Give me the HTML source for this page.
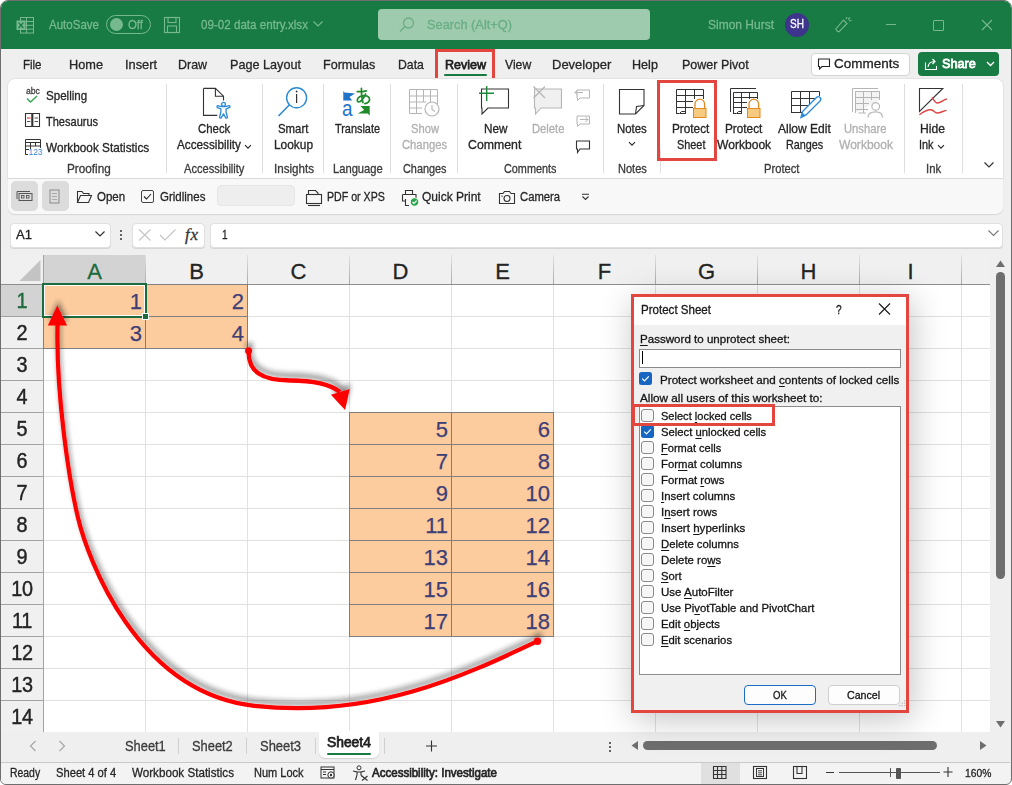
<!DOCTYPE html>
<html><head><meta charset="utf-8">
<style>
*{margin:0;padding:0;box-sizing:border-box}
html,body{width:1012px;height:785px;overflow:hidden;background:#fff}
body{font-family:"Liberation Sans",sans-serif;position:relative;color:#242424}
.a{position:absolute}
.t{position:absolute;white-space:nowrap;line-height:1;-webkit-text-stroke-width:0.3px}
u{text-decoration:underline;text-underline-offset:1.5px;text-decoration-thickness:1px}
</style></head><body>

<div class="a" style="left:0px;top:0px;width:1012px;height:785px;background:#efefef;border:1px solid #6e6e6e;border-radius:8px 8px 6px 6px;"></div>
<div class="a" style="left:1px;top:1px;width:1010px;height:48px;background:#187b43;border-radius:7px 7px 0 0;"></div>
<svg class="a" style="left:16px;top:17px;" width="18" height="17" viewBox="0 0 18 17" fill="none"><rect x="4.5" y="0.5" width="13" height="15.5" stroke="#77b98f" stroke-width="1"/>
<line x1="4.5" y1="4.5" x2="17.5" y2="4.5" stroke="#77b98f"/><line x1="4.5" y1="8.3" x2="17.5" y2="8.3" stroke="#77b98f"/><line x1="4.5" y1="12.2" x2="17.5" y2="12.2" stroke="#77b98f"/>
<line x1="10.5" y1="0.5" x2="10.5" y2="16" stroke="#77b98f"/>
<rect x="0.5" y="3.5" width="9" height="9.5" fill="#77b98f"/>
<path d="M2.6 5.6 L7.4 11 M7.4 5.6 L2.6 11" stroke="#187b43" stroke-width="1.3"/></svg>
<div class="t" style="left:49.00px;top:18.11px;font-size:13.52px;color:#77b98f;transform:scaleX(0.8533);transform-origin:0 0;">AutoSave</div>
<div class="a" style="left:106px;top:15px;width:45px;height:19px;border:1.3px solid #77b98f;border-radius:10px;"></div>
<div class="a" style="left:110px;top:18px;width:13px;height:13px;background:#77b98f;border-radius:50%;"></div>
<div class="t" style="left:128.00px;top:18.18px;font-size:13.08px;color:#77b98f;transform:scaleX(0.8687);transform-origin:0 0;">Off</div>
<svg class="a" style="left:163px;top:16px;" width="18" height="18" viewBox="0 0 18 18" fill="none"><rect x="1.5" y="1.5" width="15" height="15" stroke="#77b98f" stroke-width="1.1"/>
<rect x="5" y="1.5" width="8" height="5" stroke="#77b98f" stroke-width="1.1"/><rect x="4.5" y="10" width="9" height="6.5" stroke="#77b98f" stroke-width="1.1"/></svg>
<div class="t" style="left:201.00px;top:18.11px;font-size:13.52px;color:#77b98f;transform:scaleX(0.8595);transform-origin:0 0;">09-02 data entry.xlsx</div>
<svg class="a" style="left:312px;top:20px;" width="12" height="8" viewBox="0 0 12 8" fill="none"><path d="M1.5 1.5 L6 6 L10.5 1.5" stroke="#77b98f" stroke-width="1.2"/></svg>
<div class="a" style="left:378px;top:9px;width:272px;height:31px;background:#9ecaae;border-radius:4px;"></div>
<svg class="a" style="left:398px;top:16px;" width="18" height="18" viewBox="0 0 18 18" fill="none"><circle cx="10.5" cy="7" r="5" stroke="#69ae83" stroke-width="1.3"/><line x1="7" y1="10.5" x2="2" y2="15.5" stroke="#69ae83" stroke-width="1.5"/></svg>
<div class="t" style="left:427.00px;top:18.11px;font-size:13.52px;color:#69ae83;transform:scaleX(0.9470);transform-origin:0 0;">Search (Alt+Q)</div>
<div class="t" style="left:708.00px;top:18.11px;font-size:13.52px;color:#77b98f;transform:scaleX(0.8877);transform-origin:0 0;">Simon Hurst</div>
<div class="a" style="left:785px;top:13px;width:24px;height:24px;background:#3d348b;border-radius:50%;"></div>
<div class="t" style="left:790.00px;top:18.33px;font-size:12.79px;color:#ffffff;transform:scaleX(0.7874);transform-origin:0 0;">SH</div>
<svg class="a" style="left:834px;top:16px;" width="20" height="18" viewBox="0 0 20 18" fill="none"><path d="M3 15 L1.8 13 L9.5 4 L13 7.5 L5 15.8 Z" stroke="#77b98f" stroke-width="1.1"/><path d="M12 3 L13 1 M15 5 L17.5 4.5 M14 3.5 L16 1.5" stroke="#77b98f" stroke-width="1.1"/></svg>
<div class="a" style="left:886px;top:24px;width:10px;height:1.2px;background:#77b98f;"></div>
<div class="a" style="left:933px;top:19.5px;width:11px;height:11px;border:1.1px solid #77b98f;border-radius:1px;"></div>
<svg class="a" style="left:981px;top:19px;" width="12" height="12" viewBox="0 0 12 12" fill="none"><path d="M1 1 L11 11 M11 1 L1 11" stroke="#77b98f" stroke-width="1.1"/></svg>
<div class="t" style="left:23.00px;top:57.63px;font-size:13.37px;color:#262626;transform:scaleX(0.8593);transform-origin:0 0;">File</div>
<div class="t" style="left:69.20px;top:57.63px;font-size:13.37px;color:#262626;transform:scaleX(0.9551);transform-origin:0 0;">Home</div>
<div class="t" style="left:124.80px;top:57.63px;font-size:13.37px;color:#262626;transform:scaleX(0.9602);transform-origin:0 0;">Insert</div>
<div class="t" style="left:178.40px;top:57.63px;font-size:13.37px;color:#262626;transform:scaleX(0.9320);transform-origin:0 0;">Draw</div>
<div class="t" style="left:230.00px;top:57.63px;font-size:13.37px;color:#262626;transform:scaleX(0.9456);transform-origin:0 0;">Page Layout</div>
<div class="t" style="left:323.00px;top:57.63px;font-size:13.37px;color:#262626;transform:scaleX(0.9397);transform-origin:0 0;">Formulas</div>
<div class="t" style="left:397.50px;top:57.63px;font-size:13.37px;color:#262626;transform:scaleX(0.9193);transform-origin:0 0;">Data</div>
<div class="t" style="left:505.40px;top:57.63px;font-size:13.37px;color:#262626;transform:scaleX(0.9113);transform-origin:0 0;">View</div>
<div class="t" style="left:552.40px;top:57.63px;font-size:13.37px;color:#262626;transform:scaleX(0.9725);transform-origin:0 0;">Developer</div>
<div class="t" style="left:632.20px;top:57.63px;font-size:13.37px;color:#262626;transform:scaleX(0.9425);transform-origin:0 0;">Help</div>
<div class="t" style="left:681.60px;top:57.63px;font-size:13.37px;color:#262626;transform:scaleX(0.9350);transform-origin:0 0;">Power Pivot</div>
<div class="t" style="left:444.50px;top:57.63px;font-size:13.37px;color:#1f1f1f;transform:scaleX(0.9393);transform-origin:0 0;-webkit-text-stroke-width:0.75px;">Review</div>
<div class="a" style="left:444px;top:74px;width:43px;height:2px;background:#187b43;border-radius:1px;"></div>
<div class="a" style="left:435px;top:49px;width:60px;height:32.5px;border:3px solid #e2463e;"></div>
<div class="a" style="left:810.5px;top:52.5px;width:99px;height:23px;background:#fff;border:1px solid #d4d4d4;border-radius:4px;"></div>
<svg class="a" style="left:817px;top:58px;" width="14" height="12" viewBox="0 0 14 12" fill="none"><path d="M1.5 1 H12.5 V8.5 H5 L2.5 11 V8.5 H1.5 Z" stroke="#242424" stroke-width="1.1"/></svg>
<div class="t" style="left:834.40px;top:57.70px;font-size:12.94px;color:#1f1f1f;transform:scaleX(1.0424);transform-origin:0 0;">Comments</div>
<div class="a" style="left:918px;top:52px;width:81px;height:24px;background:#187b43;border-radius:4px;"></div>
<svg class="a" style="left:924px;top:57px;" width="16" height="14" viewBox="0 0 16 14" fill="none"><path d="M1.5 5.5 V12.5 H12.5 V9" stroke="#fff" stroke-width="1.1"/><path d="M4 10 C4.5 6 7 4.5 10.5 4.5 M8.5 2 L11 4.5 L8.5 7" stroke="#fff" stroke-width="1.2"/></svg>
<div class="t" style="left:941.90px;top:57.70px;font-size:12.94px;color:#ffffff;transform:scaleX(0.9815);transform-origin:0 0;-webkit-text-stroke-width:0.8px;">Share</div>
<svg class="a" style="left:986px;top:61px;" width="9" height="6" viewBox="0 0 9 6" fill="none"><path d="M1 1 L4.5 4.5 L8 1" stroke="#fff" stroke-width="1.4"/></svg>
<div class="a" style="left:8px;top:79px;width:995px;height:100px;background:#ffffff;border-radius:7px 7px 0 0;box-shadow:0 0 0 1px #e3e3e3;"></div>
<div class="a" style="left:8px;top:178px;width:995px;height:1px;background:#d9d9d9;"></div>
<div class="a" style="left:8px;top:179px;width:995px;height:35px;background:#f8f8f8;border-radius:0 0 7px 7px;box-shadow:0 1px 1px #d6d6d6;"></div>
<div class="a" style="left:166px;top:84px;width:1px;height:89px;background:#dedede;"></div>
<div class="a" style="left:262px;top:84px;width:1px;height:89px;background:#dedede;"></div>
<div class="a" style="left:323px;top:84px;width:1px;height:89px;background:#dedede;"></div>
<div class="a" style="left:390px;top:84px;width:1px;height:89px;background:#dedede;"></div>
<div class="a" style="left:457px;top:84px;width:1px;height:89px;background:#dedede;"></div>
<div class="a" style="left:603px;top:84px;width:1px;height:89px;background:#dedede;"></div>
<div class="a" style="left:904px;top:84px;width:1px;height:89px;background:#dedede;"></div>
<div class="a" style="left:962px;top:84px;width:1px;height:89px;background:#dedede;"></div>
<div class="a" style="left:660px;top:150px;width:1px;height:23px;background:#dedede;"></div>
<div class="t" style="left:67.40px;top:162.95px;font-size:12.06px;color:#3b3b3b;transform:scaleX(0.9747);transform-origin:0 0;">Proofing</div>
<div class="t" style="left:184.20px;top:162.95px;font-size:12.06px;color:#3b3b3b;transform:scaleX(0.9210);transform-origin:0 0;">Accessibility</div>
<div class="t" style="left:273.50px;top:162.95px;font-size:12.06px;color:#3b3b3b;transform:scaleX(0.9625);transform-origin:0 0;">Insights</div>
<div class="t" style="left:332.50px;top:162.95px;font-size:12.06px;color:#3b3b3b;transform:scaleX(0.9276);transform-origin:0 0;">Language</div>
<div class="t" style="left:402.70px;top:162.95px;font-size:12.06px;color:#3b3b3b;transform:scaleX(0.9024);transform-origin:0 0;">Changes</div>
<div class="t" style="left:503.90px;top:162.95px;font-size:12.06px;color:#3b3b3b;transform:scaleX(0.9001);transform-origin:0 0;">Comments</div>
<div class="t" style="left:617.80px;top:162.95px;font-size:12.06px;color:#3b3b3b;transform:scaleX(0.9147);transform-origin:0 0;">Notes</div>
<div class="t" style="left:764.20px;top:162.95px;font-size:12.06px;color:#3b3b3b;transform:scaleX(0.9283);transform-origin:0 0;">Protect</div>
<div class="t" style="left:925.60px;top:162.95px;font-size:12.06px;color:#3b3b3b;transform:scaleX(0.9403);transform-origin:0 0;">Ink</div>
<div class="t" style="left:45.50px;top:89.95px;font-size:12.06px;color:#262626;transform:scaleX(0.9593);transform-origin:0 0;">Spelling</div>
<div class="t" style="left:45.50px;top:116.05px;font-size:12.06px;color:#262626;transform:scaleX(0.9158);transform-origin:0 0;">Thesaurus</div>
<div class="t" style="left:45.50px;top:142.25px;font-size:12.06px;color:#262626;transform:scaleX(0.9775);transform-origin:0 0;">Workbook Statistics</div>
<div class="t" style="left:25.80px;top:86.85px;font-size:9.00px;color:#444;transform:scaleX(0.9593);transform-origin:0 0;">abc</div>
<svg class="a" style="left:25px;top:95px;" width="16" height="9" viewBox="0 0 16 9" fill="none"><path d="M2 3.5 L5.5 7 L12 1" stroke="#3aa757" stroke-width="1.5"/></svg>
<svg class="a" style="left:24px;top:112px;" width="17" height="16" viewBox="0 0 17 16" fill="none"><path d="M1.5 1.5 H7.8 V14.5 H1.5 Z M8.8 1.5 H15.5 V14.5 H8.8 Z" stroke="#333" stroke-width="1.1"/><path d="M3 6 H6.5" stroke="#d22" stroke-width="1"/><path d="M3 9.5 H6.5 M10.5 6 H14 M10.5 9.5 H14" stroke="#555" stroke-width="1"/></svg>
<svg class="a" style="left:24px;top:138px;" width="19" height="18" viewBox="0 0 19 18" fill="none"><path d="M1.5 16.5 V1.5 H16.5 V10 M1.5 4.5 H16.5 M1.5 8 H16.5 M1.5 11.5 H5 M6.5 4.5 V11 M11.5 4.5 V8 M1.5 16.5 H4" stroke="#333" stroke-width="1"/><text x="4.6" y="17.2" font-size="8.2" font-family="Liberation Sans" fill="#2b8ad6">123</text></svg>
<svg class="a" style="left:198px;top:84px;" width="36" height="36" viewBox="0 0 36 36" fill="none"><path d="M5.5 4.4 H17.4 L25.5 12.2 V16.5 M19.3 31.4 H5.5 V4.4" stroke="#333" stroke-width="1.1"/><path d="M17.4 4.4 V12.2 H25.5" stroke="#333" stroke-width="1.1"/><g transform="translate(216.5 102.3) translate(-198 -84)"><path d="M5.2 4.3 L1.2 3.3 Q0.2 3.6 0.6 5 L4.4 6.6 V10 L3 15 Q3.3 16 4.6 15.8 L7 11.6 L9.4 15.8 Q10.7 16 11 15 L9.6 10 V6.6 L13.4 5 Q13.8 3.6 12.8 3.3 L8.8 4.3 Z" fill="#fff" stroke="#2b8ad6" stroke-width="1.3" stroke-linejoin="round"/><circle cx="7" cy="2" r="1.9" fill="#fff" stroke="#2b8ad6" stroke-width="1.3"/></g></svg>
<div class="t" style="left:198.40px;top:123.15px;font-size:12.06px;color:#262626;transform:scaleX(0.9457);transform-origin:0 0;">Check</div>
<div class="t" style="left:176.60px;top:139.15px;font-size:12.06px;color:#262626;transform:scaleX(0.9743);transform-origin:0 0;">Accessibility</div>
<svg class="a" style="left:244px;top:144px;" width="8" height="6" viewBox="0 0 8 6" fill="none"><path d="M1 1.2 L4 4.2 L7 1.2" stroke="#262626" stroke-width="1.1"/></svg>
<svg class="a" style="left:276px;top:85px;" width="34" height="34" viewBox="0 0 34 34" fill="none"><circle cx="20.6" cy="12.8" r="10" stroke="#2b8ad6" stroke-width="1.4"/><path d="M13.5 19.8 L2.5 31" stroke="#2b8ad6" stroke-width="1.6"/><path d="M20.6 9 V18" stroke="#333" stroke-width="1.2"/><circle cx="20.6" cy="6.5" r="0.9" fill="#333"/></svg>
<div class="t" style="left:278.30px;top:123.15px;font-size:12.06px;color:#262626;transform:scaleX(0.9456);transform-origin:0 0;">Smart</div>
<div class="t" style="left:273.50px;top:139.15px;font-size:12.06px;color:#262626;transform:scaleX(0.9881);transform-origin:0 0;">Lookup</div>
<svg class="a" style="left:338px;top:84px;" width="36" height="36" viewBox="0 0 36 36" fill="none"><path d="M5.3 6.9 L6.4 8.5 L17 9.4 L11.5 13.1 L14.2 16.5 H5.3 Z" fill="#1f73c9"/><path d="M22.5 22 H31.7 V31.7 L29.8 29.4 H19.7 L26.1 26.1 Z" fill="#1e8a2a"/><text x="0" y="0" font-size="22" font-family="Liberation Sans" fill="#1f73c9" transform="translate(4.0 31.7) scale(0.86 1)">a</text><path d="M19.3 7.6 C22 7.9 25 7.6 28.3 6.8 M23.4 4.4 C23.3 9 23.6 14 24.9 18.6 M27.6 10 C25.6 14.5 22.4 18.2 20.4 17.9 C18.6 17.6 18.9 14.4 21.7 12.8 C24.7 11 29.6 11.2 31.2 13.8 C32.6 16.6 30.2 19.2 26.8 19.7" stroke="#1e8a2a" stroke-width="1.7" stroke-linecap="round" fill="none"/></svg>
<div class="t" style="left:335.00px;top:123.15px;font-size:12.06px;color:#262626;transform:scaleX(0.9032);transform-origin:0 0;">Translate</div>
<svg class="a" style="left:408px;top:88px;" width="32" height="30" viewBox="0 0 32 30" fill="none"><g stroke="#b5b5b5" stroke-width="1"><path d="M1.5 1.5 H29.5 V16 M1.5 1.5 V25.5 H14 M1.5 8 H29.5 M1.5 14 H18 M1.5 20 H14 M8.5 1.5 V25.5 M15.5 1.5 V14 M22.5 1.5 V14"/></g><circle cx="24" cy="21" r="7" stroke="#b5b5b5" stroke-width="1.2" fill="#fff"/><path d="M24 17 V21.5 L27 23.5" stroke="#b5b5b5" stroke-width="1.1"/></svg>
<div class="t" style="left:410.70px;top:123.15px;font-size:12.06px;color:#b0b0b0;transform:scaleX(0.9298);transform-origin:0 0;">Show</div>
<div class="t" style="left:401.50px;top:139.15px;font-size:12.06px;color:#b0b0b0;transform:scaleX(0.9334);transform-origin:0 0;">Changes</div>
<svg class="a" style="left:478px;top:85px;" width="34" height="30" viewBox="0 0 34 30" fill="none"><path d="M3.5 4 H30.5 V23 H10 L4 29 V23 H3.5 Z" stroke="#333" stroke-width="1.1" fill="#fff"/><path d="M1 8.3 H16 M8.7 1 V16" stroke="#1e8a3c" stroke-width="1.4"/></svg>
<div class="t" style="left:483.50px;top:123.15px;font-size:12.06px;color:#262626;transform:scaleX(0.9715);transform-origin:0 0;">New</div>
<div class="t" style="left:468.30px;top:139.15px;font-size:12.06px;color:#262626;transform:scaleX(1.0211);transform-origin:0 0;">Comment</div>
<svg class="a" style="left:532px;top:85px;" width="32" height="30" viewBox="0 0 32 30" fill="none"><path d="M2.5 4 H29.5 V23 H9 L3.5 29 V23 H2.5 Z" stroke="#b5b5b5" stroke-width="1.1" fill="#f0f0f0"/><path d="M1.5 1.5 L13 13 M13 1.5 L1.5 13" stroke="#b5b5b5" stroke-width="1.2"/></svg>
<div class="t" style="left:531.50px;top:123.15px;font-size:12.06px;color:#b0b0b0;transform:scaleX(0.9293);transform-origin:0 0;">Delete</div>
<svg class="a" style="left:574px;top:87px;" width="17" height="15" viewBox="0 0 17 15" fill="none"><path d="M3 3 H15.5 V11 H6 L3.5 13.5 V11 H3 Z" stroke="#b5b5b5" stroke-width="1"/><path d="M1 5.5 H9 M1 5.5 L3.5 3 M1 5.5 L3.5 8" stroke="#b5b5b5" stroke-width="1"/></svg>
<svg class="a" style="left:574px;top:113px;" width="17" height="15" viewBox="0 0 17 15" fill="none"><path d="M3 3 H15.5 V11 H6 L3.5 13.5 V11 H3 Z" stroke="#b5b5b5" stroke-width="1"/><path d="M6 6.5 H14 M14 6.5 L11.5 4 M14 6.5 L11.5 9" stroke="#b5b5b5" stroke-width="1"/></svg>
<svg class="a" style="left:574px;top:139px;" width="17" height="15" viewBox="0 0 17 15" fill="none"><path d="M2.5 2 H15.5 V10 H6 L3.5 13.5 V10 H2.5 Z" stroke="#333" stroke-width="1.1"/></svg>
<svg class="a" style="left:618px;top:88px;" width="28" height="28" viewBox="0 0 28 28" fill="none"><path d="M1.5 1.5 H26 V17.5 L17.5 26 H1.5 Z" stroke="#333" stroke-width="1.1" fill="#fff"/><path d="M26 17.5 L18.5 18.5 L17.5 26" stroke="#333" stroke-width="1.1"/></svg>
<div class="t" style="left:616.90px;top:123.15px;font-size:12.06px;color:#262626;transform:scaleX(0.9432);transform-origin:0 0;">Notes</div>
<svg class="a" style="left:628px;top:141px;" width="8" height="6" viewBox="0 0 8 6" fill="none"><path d="M1 1.2 L4 4.2 L7 1.2" stroke="#262626" stroke-width="1.1"/></svg>
<svg class="a" style="left:672px;top:86px;" width="38" height="34" viewBox="0 0 38 34" fill="none"><path d="M4.5 28 V3.5 H31.5 V13 M13.5 3.5 V28 M22.5 3.5 V13 M4.5 9.5 H31.5 M4.5 15.5 H21 M4.5 21.5 H21 M8 27.5 H13.5" stroke="#333" stroke-width="1"/><path d="M4.5 27.5 H7.5 L9.5 25.5 H13.5" stroke="#333" stroke-width="1"/><path d="M23 22.5 V18 A4.8 4.8 0 0 1 32.6 18 V22.5" stroke="#e3891f" stroke-width="1.3"/><rect x="21.5" y="22.5" width="12.5" height="9" fill="#f6cb80" stroke="#e3891f" stroke-width="1"/></svg>
<div class="t" style="left:671.50px;top:123.15px;font-size:12.06px;color:#262626;transform:scaleX(0.9780);transform-origin:0 0;">Protect</div>
<div class="t" style="left:676.50px;top:139.15px;font-size:12.06px;color:#262626;transform:scaleX(0.9034);transform-origin:0 0;">Sheet</div>
<div class="a" style="left:657px;top:80px;width:60px;height:80.5px;border:3px solid #e2463e;"></div>
<svg class="a" style="left:726px;top:86px;" width="38" height="34" viewBox="0 0 38 34" fill="none"><path d="M4.5 26 V2.5 H30" stroke="#333" stroke-width="1"/><path d="M7.5 28 V6.5 H31.5 V13 M15.5 6.5 V28 M23.5 6.5 V13 M7.5 11.5 H31.5 M7.5 16.5 H21 M7.5 21.5 H21 M11 27.5 H15.5" stroke="#333" stroke-width="1"/><path d="M7.5 27.5 H10.5 L12.5 25.5 H15.5" stroke="#333" stroke-width="1"/><path d="M23 22.5 V18 A4.8 4.8 0 0 1 32.6 18 V22.5" stroke="#e3891f" stroke-width="1.3"/><rect x="21.5" y="22.5" width="12.5" height="9" fill="#f6cb80" stroke="#e3891f" stroke-width="1"/></svg>
<div class="t" style="left:725.40px;top:123.15px;font-size:12.06px;color:#262626;transform:scaleX(0.9780);transform-origin:0 0;">Protect</div>
<div class="t" style="left:716.50px;top:139.15px;font-size:12.06px;color:#262626;transform:scaleX(1.0025);transform-origin:0 0;">Workbook</div>
<svg class="a" style="left:789px;top:88px;" width="34" height="32" viewBox="0 0 34 32" fill="none"><path d="M2.5 25 V3.5 H30.5 V8 M11.5 3.5 V25 M20.5 3.5 V17 M2.5 10.5 H30.5 M2.5 17.5 H22 M2.5 24.5 H15" stroke="#333" stroke-width="1"/><path d="M12 29.5 L13.5 23.5 L27.5 9.5 A2.4 2.4 0 0 1 31 13 L17 27 Z" stroke="#2b8ad6" stroke-width="1.4" fill="#fff"/><path d="M12 29.5 L13.3 24.5 L16.8 27.8 Z" fill="#2b8ad6"/></svg>
<div class="t" style="left:778.00px;top:123.15px;font-size:12.06px;color:#262626;transform:scaleX(0.9970);transform-origin:0 0;">Allow Edit</div>
<div class="t" style="left:786.40px;top:139.15px;font-size:12.06px;color:#262626;transform:scaleX(0.8975);transform-origin:0 0;">Ranges</div>
<svg class="a" style="left:850px;top:87px;" width="34" height="32" viewBox="0 0 34 32" fill="none"><path d="M2.5 25 V1.5 H28" stroke="#b5b5b5" stroke-width="1"/><path d="M5.5 26 V4.5 H29.5 V13 M13.5 4.5 V26 M21.5 4.5 V13 M5.5 10.5 H29.5 M5.5 16.5 H19 M5.5 22.5 H18 M8.5 26 H16" stroke="#b5b5b5" stroke-width="1" fill="#f3f3f3"/><circle cx="25.7" cy="19.4" r="3.8" fill="#fff" stroke="#b5b5b5" stroke-width="1.2"/><path d="M18 30.5 C18 26.5 21 24.8 25.7 24.8 C30.4 24.8 32.5 26.5 32.5 30.5" stroke="#b5b5b5" stroke-width="1.2" fill="#fff"/></svg>
<div class="t" style="left:844.40px;top:123.15px;font-size:12.06px;color:#b0b0b0;transform:scaleX(0.9320);transform-origin:0 0;">Unshare</div>
<div class="t" style="left:838.50px;top:139.15px;font-size:12.06px;color:#b0b0b0;transform:scaleX(1.0006);transform-origin:0 0;">Workbook</div>
<svg class="a" style="left:917px;top:86px;" width="33" height="30" viewBox="0 0 33 30" fill="none"><path d="M2.5 2.5 H25.8 L2.5 25.5 Z" stroke="#333" stroke-width="1.1" fill="#fff"/><path d="M15 11.5 C17 14 18 17 20.5 17 C23.5 17 26 14 30 12.8 M2.4 28.8 C6 26 9 23.5 14 23.7 C17 24 17.5 27 20 27 C23 27 26 25 29.5 24.4" stroke="#e04141" stroke-width="1.4"/></svg>
<div class="t" style="left:920.30px;top:123.15px;font-size:12.06px;color:#262626;transform:scaleX(1.0044);transform-origin:0 0;">Hide</div>
<div class="t" style="left:919.40px;top:139.15px;font-size:12.06px;color:#262626;transform:scaleX(0.9031);transform-origin:0 0;">Ink</div>
<svg class="a" style="left:937px;top:144px;" width="8" height="6" viewBox="0 0 8 6" fill="none"><path d="M1 1.2 L4 4.2 L7 1.2" stroke="#262626" stroke-width="1.1"/></svg>
<svg class="a" style="left:983px;top:161px;" width="12" height="8" viewBox="0 0 12 8" fill="none"><path d="M1.5 1.5 L6 6 L10.5 1.5" stroke="#333" stroke-width="1.2"/></svg>
<div class="a" style="left:11px;top:181px;width:27px;height:30px;background:#dcdcdc;border-radius:5px;"></div>
<div class="a" style="left:41.5px;top:181px;width:27px;height:30px;background:#dcdcdc;border-radius:5px;"></div>
<svg class="a" style="left:16px;top:190px;" width="18" height="12" viewBox="0 0 18 12" fill="none"><path d="M1 1.5 H14 M1 1.5 V9" stroke="#555" stroke-width="1"/><rect x="3" y="3.5" width="13" height="7" stroke="#555" stroke-width="1"/><rect x="5.5" y="5.5" width="2.5" height="2.5" stroke="#555" stroke-width=".9"/><rect x="10.5" y="5.5" width="2.5" height="2.5" stroke="#555" stroke-width=".9"/></svg>
<svg class="a" style="left:49px;top:189px;" width="12" height="16" viewBox="0 0 12 16" fill="none"><rect x="1" y="1" width="9" height="13" stroke="#8a8a8a" stroke-width="1"/><path d="M3 4.5 H8 M3 7.5 H8 M3 10.5 H8" stroke="#aaa" stroke-width="1"/></svg>
<svg class="a" style="left:76px;top:190px;" width="17" height="14" viewBox="0 0 17 14" fill="none"><path d="M1.5 12.5 V1.5 H6 L7.5 3.5 H13 V5.5 M1.5 12.5 H12.5 L15.5 5.5 H4.5 Z" stroke="#333" stroke-width="1.1"/></svg>
<div class="t" style="left:97.40px;top:191.05px;font-size:12.65px;color:#262626;transform:scaleX(0.9089);transform-origin:0 0;">Open</div>
<div class="a" style="left:141px;top:189.5px;width:13px;height:13px;border:1px solid #444;border-radius:2px;"></div>
<svg class="a" style="left:141px;top:189.5px;" width="13" height="13" viewBox="0 0 13 13" fill="none"><path d="M3 6.5 L5.5 9 L10 4" stroke="#222" stroke-width="1.1"/></svg>
<div class="t" style="left:159.60px;top:191.05px;font-size:12.65px;color:#262626;transform:scaleX(0.9101);transform-origin:0 0;">Gridlines</div>
<div class="a" style="left:217px;top:185px;width:78px;height:21px;background:#eeeeee;border:1px solid #e6e6e6;border-radius:4px;"></div>
<svg class="a" style="left:305px;top:189px;" width="18" height="18" viewBox="0 0 18 18" fill="none"><path d="M3.5 5 V1.5 H10.5 L13 4 V5" stroke="#333" stroke-width="1.1"/><rect x="1.5" y="5.5" width="15" height="9" stroke="#333" stroke-width="1.1"/><path d="M3 16.5 H15" stroke="#333" stroke-width="1.1"/></svg>
<div class="t" style="left:326.50px;top:190.75px;font-size:12.65px;color:#262626;transform:scaleX(0.8395);transform-origin:0 0;">PDF or XPS</div>
<svg class="a" style="left:401px;top:189px;" width="19" height="18" viewBox="0 0 19 18" fill="none"><path d="M4.5 5 V1.5 H11.5 V5 M1.5 5.5 H15 V9 M1.5 5.5 V12 H4.5 M4.5 10 V16.5 H8" stroke="#333" stroke-width="1.1"/><circle cx="13.5" cy="13" r="4.2" fill="#2ea44f" stroke="#fff" stroke-width=".8"/><path d="M11.5 13 L13 14.5 L15.7 11.7" stroke="#fff" stroke-width="1.1"/></svg>
<div class="t" style="left:422.20px;top:190.75px;font-size:12.65px;color:#262626;transform:scaleX(0.9493);transform-origin:0 0;">Quick Print</div>
<svg class="a" style="left:498px;top:190px;" width="18" height="15" viewBox="0 0 18 15" fill="none"><path d="M1.5 3.5 H5 L6.5 1.5 H11.5 L13 3.5 H16.5 V13.5 H1.5 Z" stroke="#333" stroke-width="1.1"/><circle cx="9" cy="8.5" r="3" stroke="#333" stroke-width="1.1"/><rect x="3.5" y="5.5" width="1.2" height="1.2" fill="#333"/></svg>
<div class="t" style="left:519.60px;top:190.75px;font-size:12.65px;color:#262626;transform:scaleX(0.8930);transform-origin:0 0;">Camera</div>
<svg class="a" style="left:581px;top:193px;" width="9" height="8" viewBox="0 0 9 8" fill="none"><path d="M1 1.2 H8 M1.5 3.5 L4.5 6.5 L7.5 3.5" stroke="#333" stroke-width="1.1"/></svg>
<div class="a" style="left:9.5px;top:222.5px;width:101px;height:25px;background:#fff;border:1px solid #e0e0e0;border-radius:4px;box-shadow:0 1px 0 #d6d6d6;"></div>
<div class="t" style="left:16.00px;top:229.25px;font-size:12.65px;color:#242424;transform:scaleX(1.0329);transform-origin:0 0;">A1</div>
<svg class="a" style="left:94px;top:230px;" width="12" height="8" viewBox="0 0 12 8" fill="none"><path d="M1.5 1.5 L6 6 L10.5 1.5" stroke="#333" stroke-width="1.2"/></svg>
<div class="a" style="left:120px;top:230px;width:2px;height:2px;background:#333;border-radius:1px;"></div>
<div class="a" style="left:120px;top:234px;width:2px;height:2px;background:#333;border-radius:1px;"></div>
<div class="a" style="left:120px;top:238px;width:2px;height:2px;background:#333;border-radius:1px;"></div>
<div class="a" style="left:131.5px;top:222.5px;width:73px;height:25px;background:#fff;border:1px solid #e0e0e0;border-radius:4px;box-shadow:0 1px 0 #d6d6d6;"></div>
<svg class="a" style="left:137px;top:228px;" width="16" height="14" viewBox="0 0 16 14" fill="none"><path d="M2 1.5 L13.5 12.5 M13.5 1.5 L2 12.5" stroke="#c4c4c4" stroke-width="1.1"/></svg>
<svg class="a" style="left:158px;top:228px;" width="20" height="14" viewBox="0 0 20 14" fill="none"><path d="M2 7 L7 12 L17.5 1.5" stroke="#c4c4c4" stroke-width="1.1"/></svg>
<div class="t" style="left:185px;top:225.5px;font-family:'Liberation Serif',serif;font-style:italic;font-size:17px;color:#333;letter-spacing:0.8px">fx</div>
<div class="a" style="left:209.5px;top:222.5px;width:793px;height:25px;background:#fff;border:1px solid #e0e0e0;border-radius:4px;box-shadow:0 1px 0 #d6d6d6;"></div>
<div class="t" style="left:221.70px;top:228.75px;font-size:12.65px;color:#242424;transform:scaleX(0.7979);transform-origin:0 0;">1</div>
<svg class="a" style="left:987px;top:229px;" width="13" height="8" viewBox="0 0 13 8" fill="none"><path d="M1.5 1.5 L6.5 6.5 L11.5 1.5" stroke="#777" stroke-width="1.1"/></svg>
<div class="a" style="left:43px;top:284px;width:947px;height:448px;background:#fff;"></div>
<div class="a" style="left:1px;top:255px;width:989px;height:29px;background:#f0f0f0;"></div>
<div class="a" style="left:1px;top:284px;width:42px;height:448px;background:#f0f0f0;"></div>
<div class="a" style="left:43px;top:255px;width:102px;height:29px;background:#d3d3d3;"></div>
<div class="a" style="left:1px;top:284px;width:43px;height:32px;background:#d3d3d3;"></div>
<svg class="a" style="left:18px;top:259px;" width="24" height="23" viewBox="0 0 24 23" fill="none"><path d="M22.5 1 V22 H1.5 Z" fill="#c3c3c3"/></svg>
<div class="a" style="left:145px;top:284px;width:1px;height:448px;background:#e1e1e1;"></div>
<div class="a" style="left:145px;top:255px;width:1px;height:29px;background:linear-gradient(#e2e2e2,#a8a8a8)"></div>
<div class="a" style="left:247px;top:284px;width:1px;height:448px;background:#e1e1e1;"></div>
<div class="a" style="left:247px;top:255px;width:1px;height:29px;background:linear-gradient(#e2e2e2,#a8a8a8)"></div>
<div class="a" style="left:349px;top:284px;width:1px;height:448px;background:#e1e1e1;"></div>
<div class="a" style="left:349px;top:255px;width:1px;height:29px;background:linear-gradient(#e2e2e2,#a8a8a8)"></div>
<div class="a" style="left:451px;top:284px;width:1px;height:448px;background:#e1e1e1;"></div>
<div class="a" style="left:451px;top:255px;width:1px;height:29px;background:linear-gradient(#e2e2e2,#a8a8a8)"></div>
<div class="a" style="left:553px;top:284px;width:1px;height:448px;background:#e1e1e1;"></div>
<div class="a" style="left:553px;top:255px;width:1px;height:29px;background:linear-gradient(#e2e2e2,#a8a8a8)"></div>
<div class="a" style="left:655px;top:284px;width:1px;height:448px;background:#e1e1e1;"></div>
<div class="a" style="left:655px;top:255px;width:1px;height:29px;background:linear-gradient(#e2e2e2,#a8a8a8)"></div>
<div class="a" style="left:757px;top:284px;width:1px;height:448px;background:#e1e1e1;"></div>
<div class="a" style="left:757px;top:255px;width:1px;height:29px;background:linear-gradient(#e2e2e2,#a8a8a8)"></div>
<div class="a" style="left:859px;top:284px;width:1px;height:448px;background:#e1e1e1;"></div>
<div class="a" style="left:859px;top:255px;width:1px;height:29px;background:linear-gradient(#e2e2e2,#a8a8a8)"></div>
<div class="a" style="left:961px;top:284px;width:1px;height:448px;background:#e1e1e1;"></div>
<div class="a" style="left:961px;top:255px;width:1px;height:29px;background:linear-gradient(#e2e2e2,#a8a8a8)"></div>
<div class="a" style="left:43px;top:316px;width:947px;height:1px;background:#e1e1e1;"></div>
<div class="a" style="left:1px;top:316px;width:43px;height:1px;background:#a2a2a2;"></div>
<div class="a" style="left:43px;top:348px;width:947px;height:1px;background:#e1e1e1;"></div>
<div class="a" style="left:1px;top:348px;width:43px;height:1px;background:#a2a2a2;"></div>
<div class="a" style="left:43px;top:380px;width:947px;height:1px;background:#e1e1e1;"></div>
<div class="a" style="left:1px;top:380px;width:43px;height:1px;background:#a2a2a2;"></div>
<div class="a" style="left:43px;top:412px;width:947px;height:1px;background:#e1e1e1;"></div>
<div class="a" style="left:1px;top:412px;width:43px;height:1px;background:#a2a2a2;"></div>
<div class="a" style="left:43px;top:444px;width:947px;height:1px;background:#e1e1e1;"></div>
<div class="a" style="left:1px;top:444px;width:43px;height:1px;background:#a2a2a2;"></div>
<div class="a" style="left:43px;top:476px;width:947px;height:1px;background:#e1e1e1;"></div>
<div class="a" style="left:1px;top:476px;width:43px;height:1px;background:#a2a2a2;"></div>
<div class="a" style="left:43px;top:508px;width:947px;height:1px;background:#e1e1e1;"></div>
<div class="a" style="left:1px;top:508px;width:43px;height:1px;background:#a2a2a2;"></div>
<div class="a" style="left:43px;top:540px;width:947px;height:1px;background:#e1e1e1;"></div>
<div class="a" style="left:1px;top:540px;width:43px;height:1px;background:#a2a2a2;"></div>
<div class="a" style="left:43px;top:572px;width:947px;height:1px;background:#e1e1e1;"></div>
<div class="a" style="left:1px;top:572px;width:43px;height:1px;background:#a2a2a2;"></div>
<div class="a" style="left:43px;top:604px;width:947px;height:1px;background:#e1e1e1;"></div>
<div class="a" style="left:1px;top:604px;width:43px;height:1px;background:#a2a2a2;"></div>
<div class="a" style="left:43px;top:636px;width:947px;height:1px;background:#e1e1e1;"></div>
<div class="a" style="left:1px;top:636px;width:43px;height:1px;background:#a2a2a2;"></div>
<div class="a" style="left:43px;top:668px;width:947px;height:1px;background:#e1e1e1;"></div>
<div class="a" style="left:1px;top:668px;width:43px;height:1px;background:#a2a2a2;"></div>
<div class="a" style="left:43px;top:700px;width:947px;height:1px;background:#e1e1e1;"></div>
<div class="a" style="left:1px;top:700px;width:43px;height:1px;background:#a2a2a2;"></div>
<div class="a" style="left:1px;top:284px;width:989px;height:1px;background:#8e8e8e;"></div>
<div class="a" style="left:43px;top:255px;width:1px;height:477px;background:#a2a2a2;"></div>
<div class="t" style="left:54.5px;width:80px;text-align:center;top:260.5px;font-size:22px;color:#1e6b3d">A</div>
<div class="t" style="left:156.5px;width:80px;text-align:center;top:260.5px;font-size:22px;color:#242424">B</div>
<div class="t" style="left:258.5px;width:80px;text-align:center;top:260.5px;font-size:22px;color:#242424">C</div>
<div class="t" style="left:360.5px;width:80px;text-align:center;top:260.5px;font-size:22px;color:#242424">D</div>
<div class="t" style="left:462.5px;width:80px;text-align:center;top:260.5px;font-size:22px;color:#242424">E</div>
<div class="t" style="left:564.5px;width:80px;text-align:center;top:260.5px;font-size:22px;color:#242424">F</div>
<div class="t" style="left:666.5px;width:80px;text-align:center;top:260.5px;font-size:22px;color:#242424">G</div>
<div class="t" style="left:768.5px;width:80px;text-align:center;top:260.5px;font-size:22px;color:#242424">H</div>
<div class="t" style="left:870.5px;width:80px;text-align:center;top:260.5px;font-size:22px;color:#242424">I</div>
<div class="t" style="left:1px;width:42px;text-align:center;top:290.1px;font-size:22.5px;color:#1e6b3d;letter-spacing:-0.3px;transform:scaleX(0.88);-webkit-text-stroke-width:0.45px">1</div>
<div class="t" style="left:1px;width:42px;text-align:center;top:322.1px;font-size:22.5px;color:#242424;letter-spacing:-0.3px;transform:scaleX(0.88);-webkit-text-stroke-width:0.45px">2</div>
<div class="t" style="left:1px;width:42px;text-align:center;top:354.1px;font-size:22.5px;color:#242424;letter-spacing:-0.3px;transform:scaleX(0.88);-webkit-text-stroke-width:0.45px">3</div>
<div class="t" style="left:1px;width:42px;text-align:center;top:386.1px;font-size:22.5px;color:#242424;letter-spacing:-0.3px;transform:scaleX(0.88);-webkit-text-stroke-width:0.45px">4</div>
<div class="t" style="left:1px;width:42px;text-align:center;top:418.1px;font-size:22.5px;color:#242424;letter-spacing:-0.3px;transform:scaleX(0.88);-webkit-text-stroke-width:0.45px">5</div>
<div class="t" style="left:1px;width:42px;text-align:center;top:450.1px;font-size:22.5px;color:#242424;letter-spacing:-0.3px;transform:scaleX(0.88);-webkit-text-stroke-width:0.45px">6</div>
<div class="t" style="left:1px;width:42px;text-align:center;top:482.1px;font-size:22.5px;color:#242424;letter-spacing:-0.3px;transform:scaleX(0.88);-webkit-text-stroke-width:0.45px">7</div>
<div class="t" style="left:1px;width:42px;text-align:center;top:514.1px;font-size:22.5px;color:#242424;letter-spacing:-0.3px;transform:scaleX(0.88);-webkit-text-stroke-width:0.45px">8</div>
<div class="t" style="left:1px;width:42px;text-align:center;top:546.1px;font-size:22.5px;color:#242424;letter-spacing:-0.3px;transform:scaleX(0.88);-webkit-text-stroke-width:0.45px">9</div>
<div class="t" style="left:1px;width:42px;text-align:center;top:578.1px;font-size:22.5px;color:#242424;letter-spacing:-0.3px;transform:scaleX(0.88);-webkit-text-stroke-width:0.45px">10</div>
<div class="t" style="left:1px;width:42px;text-align:center;top:610.1px;font-size:22.5px;color:#242424;letter-spacing:-0.3px;transform:scaleX(0.88);-webkit-text-stroke-width:0.45px">11</div>
<div class="t" style="left:1px;width:42px;text-align:center;top:642.1px;font-size:22.5px;color:#242424;letter-spacing:-0.3px;transform:scaleX(0.88);-webkit-text-stroke-width:0.45px">12</div>
<div class="t" style="left:1px;width:42px;text-align:center;top:674.1px;font-size:22.5px;color:#242424;letter-spacing:-0.3px;transform:scaleX(0.88);-webkit-text-stroke-width:0.45px">13</div>
<div class="t" style="left:1px;width:42px;text-align:center;top:706.1px;font-size:22.5px;color:#242424;letter-spacing:-0.3px;transform:scaleX(0.88);-webkit-text-stroke-width:0.45px">14</div>
<div class="a" style="left:43px;top:284px;width:205px;height:65px;background:#fccc9e;"></div>
<div class="a" style="left:43px;top:284px;width:1px;height:65px;background:#7f7f7f;"></div>
<div class="a" style="left:145px;top:284px;width:1px;height:65px;background:#7f7f7f;"></div>
<div class="a" style="left:247px;top:284px;width:1px;height:65px;background:#7f7f7f;"></div>
<div class="a" style="left:43px;top:284px;width:205px;height:1px;background:#7f7f7f;"></div>
<div class="a" style="left:43px;top:316px;width:205px;height:1px;background:#7f7f7f;"></div>
<div class="a" style="left:43px;top:348px;width:205px;height:1px;background:#7f7f7f;"></div>
<div class="t" style="left:47px;width:95px;text-align:right;top:291.3px;font-size:22px;color:#3f3f76;-webkit-text-stroke:0.25px #3f3f76">1</div>
<div class="t" style="left:149px;width:95px;text-align:right;top:291.3px;font-size:22px;color:#3f3f76;-webkit-text-stroke:0.25px #3f3f76">2</div>
<div class="t" style="left:47px;width:95px;text-align:right;top:323.3px;font-size:22px;color:#3f3f76;-webkit-text-stroke:0.25px #3f3f76">3</div>
<div class="t" style="left:149px;width:95px;text-align:right;top:323.3px;font-size:22px;color:#3f3f76;-webkit-text-stroke:0.25px #3f3f76">4</div>
<div class="a" style="left:349px;top:412px;width:205px;height:225px;background:#fccc9e;"></div>
<div class="a" style="left:349px;top:412px;width:1px;height:225px;background:#7f7f7f;"></div>
<div class="a" style="left:451px;top:412px;width:1px;height:225px;background:#7f7f7f;"></div>
<div class="a" style="left:553px;top:412px;width:1px;height:225px;background:#7f7f7f;"></div>
<div class="a" style="left:349px;top:412px;width:205px;height:1px;background:#7f7f7f;"></div>
<div class="a" style="left:349px;top:444px;width:205px;height:1px;background:#7f7f7f;"></div>
<div class="a" style="left:349px;top:476px;width:205px;height:1px;background:#7f7f7f;"></div>
<div class="a" style="left:349px;top:508px;width:205px;height:1px;background:#7f7f7f;"></div>
<div class="a" style="left:349px;top:540px;width:205px;height:1px;background:#7f7f7f;"></div>
<div class="a" style="left:349px;top:572px;width:205px;height:1px;background:#7f7f7f;"></div>
<div class="a" style="left:349px;top:604px;width:205px;height:1px;background:#7f7f7f;"></div>
<div class="a" style="left:349px;top:636px;width:205px;height:1px;background:#7f7f7f;"></div>
<div class="t" style="left:353px;width:95px;text-align:right;top:419.3px;font-size:22px;color:#3f3f76;-webkit-text-stroke:0.25px #3f3f76">5</div>
<div class="t" style="left:455px;width:95px;text-align:right;top:419.3px;font-size:22px;color:#3f3f76;-webkit-text-stroke:0.25px #3f3f76">6</div>
<div class="t" style="left:353px;width:95px;text-align:right;top:451.3px;font-size:22px;color:#3f3f76;-webkit-text-stroke:0.25px #3f3f76">7</div>
<div class="t" style="left:455px;width:95px;text-align:right;top:451.3px;font-size:22px;color:#3f3f76;-webkit-text-stroke:0.25px #3f3f76">8</div>
<div class="t" style="left:353px;width:95px;text-align:right;top:483.3px;font-size:22px;color:#3f3f76;-webkit-text-stroke:0.25px #3f3f76">9</div>
<div class="t" style="left:455px;width:95px;text-align:right;top:483.3px;font-size:22px;color:#3f3f76;-webkit-text-stroke:0.25px #3f3f76">10</div>
<div class="t" style="left:353px;width:95px;text-align:right;top:515.3px;font-size:22px;color:#3f3f76;-webkit-text-stroke:0.25px #3f3f76">11</div>
<div class="t" style="left:455px;width:95px;text-align:right;top:515.3px;font-size:22px;color:#3f3f76;-webkit-text-stroke:0.25px #3f3f76">12</div>
<div class="t" style="left:353px;width:95px;text-align:right;top:547.3px;font-size:22px;color:#3f3f76;-webkit-text-stroke:0.25px #3f3f76">13</div>
<div class="t" style="left:455px;width:95px;text-align:right;top:547.3px;font-size:22px;color:#3f3f76;-webkit-text-stroke:0.25px #3f3f76">14</div>
<div class="t" style="left:353px;width:95px;text-align:right;top:579.3px;font-size:22px;color:#3f3f76;-webkit-text-stroke:0.25px #3f3f76">15</div>
<div class="t" style="left:455px;width:95px;text-align:right;top:579.3px;font-size:22px;color:#3f3f76;-webkit-text-stroke:0.25px #3f3f76">16</div>
<div class="t" style="left:353px;width:95px;text-align:right;top:611.3px;font-size:22px;color:#3f3f76;-webkit-text-stroke:0.25px #3f3f76">17</div>
<div class="t" style="left:455px;width:95px;text-align:right;top:611.3px;font-size:22px;color:#3f3f76;-webkit-text-stroke:0.25px #3f3f76">18</div>
<div class="a" style="left:42px;top:283px;width:105px;height:35px;border:2px solid #1e6b3d;box-shadow:inset 0 0 0 1px #fff;"></div>
<div class="a" style="left:142px;top:313px;width:7px;height:7px;background:#1e6b3d;border:1px solid #fff;"></div>
<div class="a" style="left:990px;top:255px;width:20px;height:477px;background:#efefef;"></div>
<svg class="a" style="left:995px;top:259px;" width="11" height="9" viewBox="0 0 11 9" fill="none"><path d="M1 8 L5.5 1.5 L10 8 Z" fill="#6e6e6e"/></svg>
<div class="a" style="left:996px;top:272px;width:9px;height:307px;background:#6e6e6e;border-radius:4.5px;"></div>
<svg class="a" style="left:995px;top:720px;" width="11" height="9" viewBox="0 0 11 9" fill="none"><path d="M1 1 L5.5 7.5 L10 1 Z" fill="#6e6e6e"/></svg>
<div class="a" style="left:1px;top:732px;width:1009px;height:30px;background:#efefef;"></div>
<svg class="a" style="left:28px;top:740px;" width="10" height="12" viewBox="0 0 10 12" fill="none"><path d="M7.5 1 L2.5 6 L7.5 11" stroke="#a6a6a6" stroke-width="1.2"/></svg>
<svg class="a" style="left:57px;top:740px;" width="10" height="12" viewBox="0 0 10 12" fill="none"><path d="M2.5 1 L7.5 6 L2.5 11" stroke="#a6a6a6" stroke-width="1.2"/></svg>
<div class="t" style="left:124.50px;top:738.77px;font-size:14.39px;color:#3b3b3b;transform:scaleX(0.8944);transform-origin:0 0;">Sheet1</div>
<div class="a" style="left:178px;top:738px;width:1px;height:16px;background:#d0d0d0;"></div>
<div class="t" style="left:191.60px;top:738.77px;font-size:14.39px;color:#3b3b3b;transform:scaleX(0.8944);transform-origin:0 0;">Sheet2</div>
<div class="a" style="left:246px;top:738px;width:1px;height:16px;background:#d0d0d0;"></div>
<div class="t" style="left:259.60px;top:738.77px;font-size:14.39px;color:#3b3b3b;transform:scaleX(0.9010);transform-origin:0 0;">Sheet3</div>
<div class="a" style="left:314.5px;top:738px;width:1px;height:16px;background:#d0d0d0;"></div>
<div class="a" style="left:319px;top:731px;width:60px;height:27px;background:#fff;border-radius:0 0 6px 6px;box-shadow:0 1px 1px #d0d0d0;"></div>
<div class="t" style="left:327.20px;top:736.26px;font-size:13.81px;color:#1f1f1f;transform:scaleX(1.0029);transform-origin:0 0;-webkit-text-stroke-width:0.75px;">Sheet4</div>
<div class="a" style="left:327px;top:753px;width:44px;height:2px;background:#187b43;border-radius:1px;"></div>
<div class="a" style="left:383.5px;top:738px;width:1px;height:16px;background:#d0d0d0;"></div>
<svg class="a" style="left:425px;top:740px;" width="13" height="12" viewBox="0 0 13 12" fill="none"><path d="M6.5 0.5 V11.5 M1 6 H12" stroke="#333" stroke-width="1.1"/></svg>
<div class="a" style="left:609px;top:741.5px;width:2px;height:2px;background:#333;border-radius:1px;"></div>
<div class="a" style="left:609px;top:745.5px;width:2px;height:2px;background:#333;border-radius:1px;"></div>
<div class="a" style="left:609px;top:749.5px;width:2px;height:2px;background:#333;border-radius:1px;"></div>
<svg class="a" style="left:630px;top:740px;" width="9" height="11" viewBox="0 0 9 11" fill="none"><path d="M8 1 L1.5 5.5 L8 10 Z" fill="#6e6e6e"/></svg>
<div class="a" style="left:643px;top:741px;width:294px;height:9px;background:#6e6e6e;border-radius:4.5px;"></div>
<svg class="a" style="left:979px;top:740px;" width="9" height="11" viewBox="0 0 9 11" fill="none"><path d="M1 1 L7.5 5.5 L1 10 Z" fill="#6e6e6e"/></svg>
<div class="a" style="left:1px;top:762px;width:1009px;height:1px;background:#c9c9c9;"></div>
<div class="a" style="left:1px;top:763px;width:1009px;height:21px;background:#f3f3f3;border-radius:0 0 5px 5px;"></div>
<div class="t" style="left:9.50px;top:766.85px;font-size:12.65px;color:#262626;transform:scaleX(0.8236);transform-origin:0 0;">Ready</div>
<div class="t" style="left:56.40px;top:766.85px;font-size:12.65px;color:#262626;transform:scaleX(0.8839);transform-origin:0 0;">Sheet 4 of 4</div>
<div class="t" style="left:132.30px;top:766.85px;font-size:12.65px;color:#262626;transform:scaleX(0.9208);transform-origin:0 0;">Workbook Statistics</div>
<div class="t" style="left:254.40px;top:766.85px;font-size:12.65px;color:#262626;transform:scaleX(0.8707);transform-origin:0 0;">Num Lock</div>
<svg class="a" style="left:320px;top:766px;" width="17" height="14" viewBox="0 0 17 14" fill="none"><rect x="1" y="1" width="13" height="11" stroke="#333" stroke-width="1"/><path d="M1 3.5 H14 M3 6 H6 M3 8.5 H6" stroke="#333"/><circle cx="11" cy="9" r="3.2" fill="#f3f3f3" stroke="#333"/><circle cx="11" cy="9" r="1.2" fill="#333"/></svg>
<svg class="a" style="left:352px;top:765px;" width="17" height="16" viewBox="0 0 17 16" fill="none"><circle cx="7" cy="2.8" r="2" stroke="#333" stroke-width="1"/><path d="M1 6 L5 7 V10 L3.5 15 M13 6 L9 7 V10 L10.5 12 M5 7 H9" stroke="#333" stroke-width="1.1"/><path d="M10 11 L15.5 15.5 M15.5 11 L10 15.5" stroke="#333" stroke-width="1.1"/></svg>
<div class="t" style="left:371.80px;top:766.85px;font-size:12.65px;color:#242424;transform:scaleX(0.9119);transform-origin:0 0;-webkit-text-stroke-width:0.7px;">Accessibility: Investigate</div>
<div class="a" style="left:701px;top:763px;width:39px;height:21px;background:#e0e0e0;"></div>
<svg class="a" style="left:712px;top:765px;" width="16" height="15" viewBox="0 0 16 15" fill="none"><path d="M1.5 1.5 H14 V13.5 H1.5 Z M1.5 5.5 H14 M1.5 9.5 H14 M5.5 1.5 V13.5 M9.8 1.5 V13.5" stroke="#333" stroke-width="1.1"/></svg>
<svg class="a" style="left:752px;top:765px;" width="16" height="15" viewBox="0 0 16 15" fill="none"><rect x="1.5" y="1.5" width="13" height="12" stroke="#333" stroke-width="1.1"/><rect x="4.5" y="3.5" width="7" height="8" stroke="#333" stroke-width="1"/><path d="M6 5.8 H10 M6 7.8 H10 M6 9.8 H10" stroke="#333" stroke-width=".9"/></svg>
<svg class="a" style="left:792px;top:765px;" width="16" height="15" viewBox="0 0 16 15" fill="none"><rect x="1.5" y="1.5" width="13" height="12" stroke="#333" stroke-width="1.1"/><path d="M5 1.5 V8.5 H10 V1.5" stroke="#333" stroke-width="1.1"/></svg>
<div class="a" style="left:825.5px;top:772px;width:8px;height:1.2px;background:#333;"></div>
<div class="a" style="left:839px;top:772px;width:101px;height:1px;background:#555;"></div>
<div class="a" style="left:889.5px;top:768px;width:1px;height:9px;background:#555;"></div>
<div class="a" style="left:896px;top:767.5px;width:5px;height:11px;background:#555;border-radius:1px;"></div>
<svg class="a" style="left:943px;top:766px;" width="10" height="12" viewBox="0 0 10 12" fill="none"><path d="M5 1 V11 M0.5 6 H9.5" stroke="#333" stroke-width="1.1"/></svg>
<div class="t" style="left:965.40px;top:767.51px;font-size:11.05px;color:#262626;transform:scaleX(0.9336);transform-origin:0 0;">160%</div>
<div class="a" style="left:631px;top:294px;width:278px;height:419px;box-shadow:3px 6px 32px rgba(0,0,0,0.24);background:#f0f0f0;"></div>
<div class="a" style="left:634px;top:297px;width:272px;height:28px;background:#fff;"></div>
<div class="a" style="left:631px;top:294px;width:278px;height:419px;border:3px solid #e2463e;"></div>
<div class="t" style="left:641.30px;top:303.65px;font-size:12.06px;color:#1a1a1a;transform:scaleX(0.9589);transform-origin:0 0;">Protect Sheet</div>
<div class="t" style="left:836.40px;top:302.66px;font-size:13.23px;color:#1a1a1a;transform:scaleX(0.7629);transform-origin:0 0;">?</div>
<svg class="a" style="left:878px;top:303px;" width="13" height="12" viewBox="0 0 13 12" fill="none"><path d="M1 0.5 L12 11.5 M12 0.5 L1 11.5" stroke="#1a1a1a" stroke-width="1.1"/></svg>
<div class="t" style="left:640.20px;top:333.49px;font-size:11.77px;color:#141414;transform:scaleX(0.9838);transform-origin:0 0;"><u>P</u>assword to unprotect sheet:</div>
<div class="a" style="left:639px;top:348.5px;width:262px;height:19.5px;background:#fff;border:1px solid #8a8a8a;"></div>
<div class="a" style="left:642px;top:351px;width:1px;height:13px;background:#000;"></div>
<svg class="a" style="left:639px;top:372px" width="13" height="13" viewBox="0 0 13 13"><rect x="0" y="0" width="13" height="13" rx="2.5" fill="#1766c2"/><path d="M3.2 6.6 L5.5 8.9 L9.8 4.4" stroke="#fff" stroke-width="1.2" fill="none"/></svg>
<div class="t" style="left:659.50px;top:373.79px;font-size:11.77px;color:#141414;transform:scaleX(0.9888);transform-origin:0 0;">Protect worksheet and <u>c</u>ontents of locked cells</div>
<div class="t" style="left:640.30px;top:391.69px;font-size:11.77px;color:#141414;transform:scaleX(0.9973);transform-origin:0 0;">Allow all users of this worksheet to:</div>
<div class="a" style="left:639px;top:406px;width:262px;height:268.5px;background:#fff;border:1px solid #8c8c8c;"></div>
<div class="a" style="left:641px;top:409px;width:13px;height:13px;border:1px solid #8a8a8a;border-radius:3px;background:#f6f6f6"></div>
<div class="t" style="left:661.40px;top:410.19px;font-size:11.77px;color:#141414;transform:scaleX(0.9387);transform-origin:0 0;">Select <u>l</u>ocked cells</div>
<svg class="a" style="left:641px;top:425px" width="13" height="13" viewBox="0 0 13 13"><rect x="0" y="0" width="13" height="13" rx="2.5" fill="#1766c2"/><path d="M3.2 6.6 L5.5 8.9 L9.8 4.4" stroke="#fff" stroke-width="1.2" fill="none"/></svg>
<div class="t" style="left:661.40px;top:426.19px;font-size:11.77px;color:#141414;transform:scaleX(0.9558);transform-origin:0 0;">Select <u>u</u>nlocked cells</div>
<div class="a" style="left:641px;top:441px;width:13px;height:13px;border:1px solid #8a8a8a;border-radius:3px;background:#f6f6f6"></div>
<div class="t" style="left:661.40px;top:442.19px;font-size:11.77px;color:#141414;transform:scaleX(0.9391);transform-origin:0 0;"><u>F</u>ormat cells</div>
<div class="a" style="left:641px;top:457px;width:13px;height:13px;border:1px solid #8a8a8a;border-radius:3px;background:#f6f6f6"></div>
<div class="t" style="left:661.40px;top:458.19px;font-size:11.77px;color:#141414;transform:scaleX(0.9631);transform-origin:0 0;">For<u>m</u>at columns</div>
<div class="a" style="left:641px;top:473px;width:13px;height:13px;border:1px solid #8a8a8a;border-radius:3px;background:#f6f6f6"></div>
<div class="t" style="left:661.40px;top:474.19px;font-size:11.77px;color:#141414;transform:scaleX(0.9709);transform-origin:0 0;">Format <u>r</u>ows</div>
<div class="a" style="left:641px;top:489px;width:13px;height:13px;border:1px solid #8a8a8a;border-radius:3px;background:#f6f6f6"></div>
<div class="t" style="left:661.40px;top:490.19px;font-size:11.77px;color:#141414;transform:scaleX(0.9715);transform-origin:0 0;"><u>I</u>nsert columns</div>
<div class="a" style="left:641px;top:505px;width:13px;height:13px;border:1px solid #8a8a8a;border-radius:3px;background:#f6f6f6"></div>
<div class="t" style="left:661.40px;top:506.19px;font-size:11.77px;color:#141414;transform:scaleX(0.9762);transform-origin:0 0;">I<u>n</u>sert rows</div>
<div class="a" style="left:641px;top:521px;width:13px;height:13px;border:1px solid #8a8a8a;border-radius:3px;background:#f6f6f6"></div>
<div class="t" style="left:661.40px;top:522.19px;font-size:11.77px;color:#141414;transform:scaleX(0.9836);transform-origin:0 0;">Insert <u>h</u>yperlinks</div>
<div class="a" style="left:641px;top:537px;width:13px;height:13px;border:1px solid #8a8a8a;border-radius:3px;background:#f6f6f6"></div>
<div class="t" style="left:661.40px;top:538.19px;font-size:11.77px;color:#141414;transform:scaleX(0.9603);transform-origin:0 0;"><u>D</u>elete columns</div>
<div class="a" style="left:641px;top:553px;width:13px;height:13px;border:1px solid #8a8a8a;border-radius:3px;background:#f6f6f6"></div>
<div class="t" style="left:661.40px;top:554.19px;font-size:11.77px;color:#141414;transform:scaleX(0.9684);transform-origin:0 0;">Delete ro<u>w</u>s</div>
<div class="a" style="left:641px;top:569px;width:13px;height:13px;border:1px solid #8a8a8a;border-radius:3px;background:#f6f6f6"></div>
<div class="t" style="left:661.40px;top:570.19px;font-size:11.77px;color:#141414;transform:scaleX(0.9535);transform-origin:0 0;"><u>S</u>ort</div>
<div class="a" style="left:641px;top:585px;width:13px;height:13px;border:1px solid #8a8a8a;border-radius:3px;background:#f6f6f6"></div>
<div class="t" style="left:661.40px;top:586.19px;font-size:11.77px;color:#141414;transform:scaleX(0.9792);transform-origin:0 0;">Use <u>A</u>utoFilter</div>
<div class="a" style="left:641px;top:601px;width:13px;height:13px;border:1px solid #8a8a8a;border-radius:3px;background:#f6f6f6"></div>
<div class="t" style="left:661.40px;top:602.19px;font-size:11.77px;color:#141414;transform:scaleX(0.9605);transform-origin:0 0;">Use Pi<u>v</u>otTable and PivotChart</div>
<div class="a" style="left:641px;top:617px;width:13px;height:13px;border:1px solid #8a8a8a;border-radius:3px;background:#f6f6f6"></div>
<div class="t" style="left:661.40px;top:618.19px;font-size:11.77px;color:#141414;transform:scaleX(0.9693);transform-origin:0 0;">Edit <u>o</u>bjects</div>
<div class="a" style="left:641px;top:633px;width:13px;height:13px;border:1px solid #8a8a8a;border-radius:3px;background:#f6f6f6"></div>
<div class="t" style="left:661.40px;top:634.19px;font-size:11.77px;color:#141414;transform:scaleX(0.9616);transform-origin:0 0;"><u>E</u>dit scenarios</div>
<div class="a" style="left:632px;top:404px;width:143px;height:21.5px;border:3px solid #e2463e;"></div>
<div class="a" style="left:743.5px;top:684.5px;width:72.5px;height:20.5px;background:#fdfdfd;border:1.6px solid #1a6cc4;border-radius:4px;"></div>
<div class="t" style="left:772.80px;top:688.79px;font-size:11.77px;color:#141414;transform:scaleX(0.8112);transform-origin:0 0;">OK</div>
<div class="a" style="left:827.5px;top:684.5px;width:72px;height:20.5px;background:#fdfdfd;border:1px solid #cfcfcf;border-radius:4px;"></div>
<div class="t" style="left:846.70px;top:688.79px;font-size:11.77px;color:#141414;transform:scaleX(0.9053);transform-origin:0 0;">Cancel</div>
<svg class="a" style="left:0;top:0" width="1012" height="785" viewBox="0 0 1012 785">
<defs><filter id="sh" x="-10%" y="-10%" width="120%" height="120%"><feGaussianBlur in="SourceAlpha" stdDeviation="2.6"/><feOffset dx="1.2" dy="-4.8" result="b"/><feFlood flood-color="#222" flood-opacity="0.5"/><feComposite in2="b" operator="in"/><feMerge><feMergeNode/><feMergeNode in="SourceGraphic"/></feMerge></filter></defs>
<g filter="url(#sh)"><path d="M537.5 641.2 C463.7 676.2 372.0 719.0 254.2 705.8 C136.3 692.5 87.4 557.6 78.0 517.8 C68.6 478.0 55.7 391.4 57.6 323.0" stroke="#ff0000" stroke-width="4.2" fill="none"/>
<circle cx="537.5" cy="641.2" r="3.7" fill="#ff0000"/>
<path d="M57.3 305.5 L47.8 325.5 L67.1 325.5 Z" fill="#ff0000"/>
<path d="M248.6 350.7 C248 372 262 380.5 290 380.5 C315 380.5 330 384 340 392" stroke="#ff0000" stroke-width="4.3" fill="none"/>
<circle cx="248.6" cy="350.7" r="3.5" fill="#ff0000"/>
<path d="M345.1 410.1 L330.9 394.8 L349.7 389.1 Z" fill="#ff0000"/></g></svg>
<svg class="a" style="left:897px;top:699px;" width="10" height="10" viewBox="0 0 10 10" fill="none"><g fill="#b8b8b8"><rect x="7" y="1" width="1.3" height="1.3"/><rect x="4.5" y="3.5" width="1.3" height="1.3"/><rect x="7" y="3.5" width="1.3" height="1.3"/><rect x="2" y="6" width="1.3" height="1.3"/><rect x="4.5" y="6" width="1.3" height="1.3"/><rect x="7" y="6" width="1.3" height="1.3"/></g></svg>
</body></html>
